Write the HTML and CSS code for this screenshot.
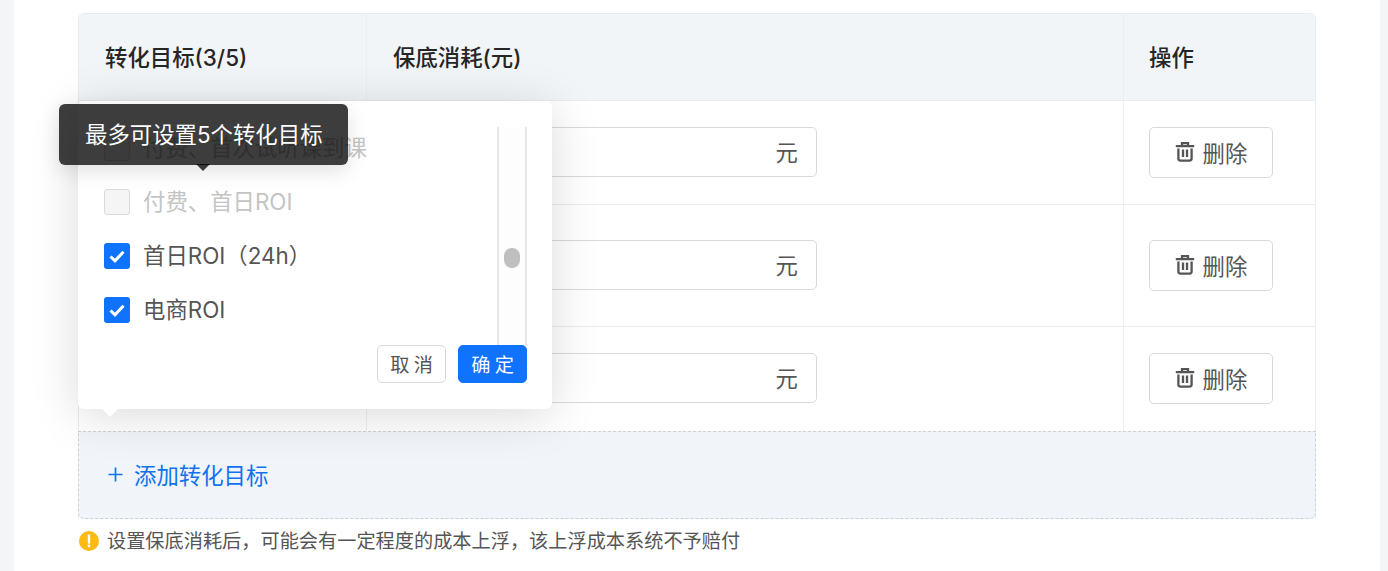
FILE: index.html
```html
<!DOCTYPE html>
<html lang="zh-CN">
<head>
<meta charset="utf-8">
<title>转化目标</title>
<link rel="stylesheet" href="styles.css">
</head>
<body>
<div class="page">
  <main class="content">
    <div class="table">
      <div class="row head">
        <div class="cell c1">转化目标(3/5)</div>
        <div class="cell c2">保底消耗(元)</div>
        <div class="cell c3">操作</div>
      </div>
      <div class="row r1">
        <div class="cell c1"></div>
        <div class="cell c2"><div class="input"><span>元</span></div></div>
        <div class="cell c3"><button class="del"><svg viewBox="0 0 20 20" class="trash"><path d="M7 3.4V1.2h6v2.2M.8 4.2h18.4M3.4 6.6v10c0 1.2.8 2 2 2h9.2c1.2 0 2-.8 2-2V6.6M8 7.5v7.5M12 7.5v7.5" fill="none" stroke="#555" stroke-width="2.3"/></svg>删除</button></div>
      </div>
      <div class="row r2">
        <div class="cell c1"></div>
        <div class="cell c2"><div class="input"><span>元</span></div></div>
        <div class="cell c3"><button class="del"><svg viewBox="0 0 20 20" class="trash"><path d="M7 3.4V1.2h6v2.2M.8 4.2h18.4M3.4 6.6v10c0 1.2.8 2 2 2h9.2c1.2 0 2-.8 2-2V6.6M8 7.5v7.5M12 7.5v7.5" fill="none" stroke="#555" stroke-width="2.3"/></svg>删除</button></div>
      </div>
      <div class="row r3">
        <div class="cell c1"></div>
        <div class="cell c2"><div class="input"><span>元</span></div></div>
        <div class="cell c3"><button class="del"><svg viewBox="0 0 20 20" class="trash"><path d="M7 3.4V1.2h6v2.2M.8 4.2h18.4M3.4 6.6v10c0 1.2.8 2 2 2h9.2c1.2 0 2-.8 2-2V6.6M8 7.5v7.5M12 7.5v7.5" fill="none" stroke="#555" stroke-width="2.3"/></svg>删除</button></div>
      </div>
      <div class="add"><svg viewBox="0 0 16 16" class="plus"><path d="M8 .5v15M.5 8h15" stroke="#0f73ee" stroke-width="1.8" fill="none"/></svg>添加转化目标</div>

      <div class="popover">
        <div class="list">
          <label class="opt dim"><i class="box"></i>付费、首次试听课到课</label>
          <label class="opt dim"><i class="box"></i>付费、首日ROI</label>
          <label class="opt"><i class="box on"><svg viewBox="0 0 26 26"><path d="M6.5 13.5l4.5 4.3L19.5 8.8" fill="none" stroke="#fff" stroke-width="3"/></svg></i>首日ROI（24h）</label>
          <label class="opt"><i class="box on"><svg viewBox="0 0 26 26"><path d="M6.5 13.5l4.5 4.3L19.5 8.8" fill="none" stroke="#fff" stroke-width="3"/></svg></i>电商ROI</label>
        </div>
        <div class="track"><div class="thumb"></div></div>
        <div class="actions">
          <button class="btn">取 消</button>
          <button class="btn primary">确 定</button>
        </div>
      </div>
      <div class="tip">最多可设置5个转化目标</div>
    </div>
    <p class="note"><svg viewBox="0 0 20 20" class="warn"><circle cx="10" cy="10" r="10" fill="#fdb914"/><path d="M10 4.5v7" stroke="#fff" stroke-width="2.4" stroke-linecap="round"/><circle cx="10" cy="15" r="1.4" fill="#fff"/></svg>设置保底消耗后，可能会有一定程度的成本上浮，该上浮成本系统不予赔付</p>
  </main>
</div>
<div class="marks" id="marks"></div>
<script src="marks.js"></script>
</body>
</html>
```
FILE: styles.css
```css
* { box-sizing: border-box; }
html, body { margin: 0; height: 571px; overflow: hidden; }
body { background: #fff; font-family: Inter, "Noto Sans CJK SC", sans-serif; color: #333; }
.page { height: 571px; padding: 0 8px 0 14px; background: #f4f5f7; }
.content { height: 571px; background: #fff; padding: 13px 0 0 64px; }

.table { position: relative; width: 1238px; border: 1px solid #e8ebef; border-bottom: 0; border-radius: 6px 6px 0 0; }
.row { display: flex; border-bottom: 1px solid #e9ecef; }
.cell { display: flex; align-items: flex-start; padding-left: 26px; border-right: 1px solid #eceef1; }
.cell.c1 { width: 288px; }
.cell.c2 { width: 757px; }
.cell.c3 { flex: 1; border-right: 0; padding-left: 25px; }
.head { height: 87px; background: #f2f5f8; font-size: 22.4px; font-weight: 500; color: #262626; }
.head .cell { align-items: center; padding-bottom: 2px; }
.r1 { height: 104px; }
.r2 { height: 122px; }
.r3 { height: 104px; border-bottom: 0; }
.r1 .cell, .r3 .cell { padding-top: 26px; }
.r2 .cell { padding-top: 35px; }

.input { width: 424px; height: 50px; border: 1px solid #d9d9d9; border-radius: 5px; display: flex; align-items: center; justify-content: flex-end; padding: 0 18px 2px 0; font-size: 22.4px; color: #555; background: #fff; }
.del { width: 124px; height: 51px; border: 1px solid #d9d9d9; border-radius: 5px; background: #fff; display: flex; align-items: center; justify-content: center; gap: 8px; font: 22.4px "Noto Sans CJK SC", sans-serif; color: #555; padding: 0 0 1px; }
.trash { width: 20px; height: 20px; }

.add { height: 88px; margin: 0 -1px; background: #f1f4f8; border: 1px dashed #cdd0d4; border-radius: 0 0 6px 6px; display: flex; align-items: center; padding: 0 0 2px 29px; gap: 11px; font-size: 22.4px; color: #0f73ee; }
.plus { width: 15px; height: 15px; }

.note { display: flex; align-items: center; gap: 8px; margin: 11px 0 0; padding-left: 1px; font-size: 19.2px; line-height: 22px; color: #555; }
.warn { width: 20px; height: 20px; }

.popover { position: absolute; left: -1px; top: 87px; width: 474px; height: 308px; background: #fff; border-radius: 6px; box-shadow: 0 6px 48px rgba(0,0,0,.15); }
.popover::after { content: ""; position: absolute; left: 24px; bottom: -8px; border: 8px solid transparent; border-bottom: 0; border-top-color: #fff; }
.list { position: absolute; left: 26px; top: 20px; width: 390px; height: 220px; overflow: hidden; }
.opt { height: 54px; display: flex; align-items: center; gap: 13px; font-size: 22.4px; line-height: 26px; color: #555; white-space: nowrap; }
.opt.dim { color: #c4c4c4; }
.box { width: 26px; height: 26px; border: 1px solid #d9d9d9; border-radius: 3px; background: #f5f5f5; flex: none; display: block; }
.box.on { border: 0; background: #0f73ff; }
.box svg { display: block; width: 26px; height: 26px; }
.track { position: absolute; left: 419px; top: 26px; width: 30px; height: 219px; border-left: 2px solid #e8e8e8; border-right: 2px solid #e8e8e8; background: #fdfdfd; }
.thumb { position: absolute; left: 5px; top: 121px; width: 16px; height: 20px; border-radius: 8px; background: #bfbfbf; }
.actions { position: absolute; right: 25px; top: 244px; display: flex; gap: 12px; }
.btn { width: 69px; height: 38px; border: 1px solid #d9d9d9; border-radius: 5px; background: #fff; font: 19.2px "Noto Sans CJK SC", sans-serif; color: #555; padding: 0; }
.btn.primary { background: #0f73ff; border-color: #0f73ff; color: #fff; }

.tip { position: absolute; left: -20px; top: 90px; width: 289px; height: 61px; background: rgba(0,0,0,.76); border-radius: 6px; color: #fff; font-size: 22.4px; display: flex; align-items: center; padding: 0 0 4px 26px; box-shadow: 0 6px 20px rgba(0,0,0,.12); }
.tip::after { content: ""; position: absolute; left: 137px; bottom: -6px; border: 7px solid transparent; border-bottom: 0; border-top-color: rgba(0,0,0,.76); }

.marks { position: absolute; inset: 0; overflow: hidden; pointer-events: none; }
.mark { position: absolute; transform: rotate(45deg); transform-origin: left top; font: 26px/30px "Liberation Sans", sans-serif; letter-spacing: .3px; color: rgba(0,0,0,.022); white-space: pre; }
```
FILE: marks.js
```js
var box = document.getElementById('marks');
for (var y = -255; y < 600; y += 80) {
  for (var x = -243; x < 1400; x += 340) {
    var m = document.createElement('div');
    m.className = 'mark';
    m.style.left = x + 'px';
    m.style.top = y + 'px';
    m.textContent = 'dengjiayin - 2023/05/31\n10:41:33';
    box.appendChild(m);
  }
}
```
